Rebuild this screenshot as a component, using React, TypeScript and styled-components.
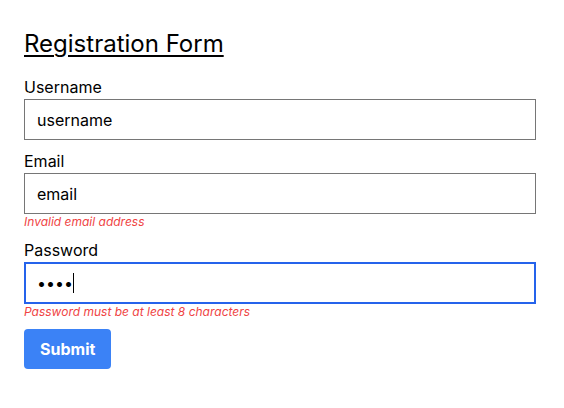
import React from "react";
import styled, { createGlobalStyle } from "styled-components";

const Global = createGlobalStyle`
  html, body { margin: 0; padding: 0; background: #ffffff; }
  body { font-family: Inter, "Noto Sans", sans-serif; color: #000; }
  * { box-sizing: border-box; }
`;

const Page = styled.div`
  padding: 29px 24px;
`;

const Form = styled.form`
  width: 512px;
  display: flex;
  flex-direction: column;
`;

const Title = styled.h2`
  margin: 0 0 19px;
  font-size: 24px;
  font-weight: 400;
  text-decoration: underline;
  text-underline-offset: 3px;
  text-decoration-thickness: 1.5px;
`;

const Field = styled.div`
  display: flex;
  flex-direction: column;
  margin-bottom: 11px;
`;

const Label = styled.label`
  font-size: 16px;
  line-height: 19px;
  margin: 1px 0 2px;
`;

const InputWrap = styled.div`
  position: relative;
`;

const Input = styled.input<{ $active?: boolean }>`
  display: block;
  width: 100%;
  height: ${(p) => (p.$active ? "42px" : "41px")};
  padding: 0 ${(p) => (p.$active ? "11px" : "12px")};
  font-family: Inter, "Noto Sans", sans-serif;
  font-size: 16px;
  color: #000;
  border: ${(p) => (p.$active ? "2px solid #2563eb" : "1px solid #767676")};
  border-radius: 0;
  outline: none;
  background: #fff;
  caret-color: transparent;
`;

const Caret = styled.span`
  position: absolute;
  left: 49px;
  top: 11px;
  width: 1px;
  height: 20px;
  background: #000;
`;

const ErrorText = styled.span`
  font-size: 12px;
  font-style: italic;
  color: #ef4444;
  line-height: 15px;
`;

const SubmitButton = styled.button`
  align-self: flex-start;
  margin-top: -1px;
  height: 40px;
  padding: 0 16px;
  background: #3b82f6;
  color: #fff;
  font-family: Inter, "Noto Sans", sans-serif;
  font-size: 16px;
  font-weight: 700;
  border: none;
  border-radius: 4px;
`;

export default function App() {
  return (
    <Page>
      <Global />
      <Form onSubmit={(e) => e.preventDefault()}>
        <Title>Registration Form</Title>
        <Field>
          <Label>Username</Label>
          <Input defaultValue="username" readOnly />
        </Field>
        <Field>
          <Label>Email</Label>
          <Input defaultValue="email" readOnly />
          <ErrorText>Invalid email address</ErrorText>
        </Field>
        <Field>
          <Label>Password</Label>
          <InputWrap>
            <Input type="password" defaultValue="1234" $active readOnly />
            <Caret />
          </InputWrap>
          <ErrorText>Password must be at least 8 characters</ErrorText>
        </Field>
        <SubmitButton type="submit">Submit</SubmitButton>
      </Form>
    </Page>
  );
}
